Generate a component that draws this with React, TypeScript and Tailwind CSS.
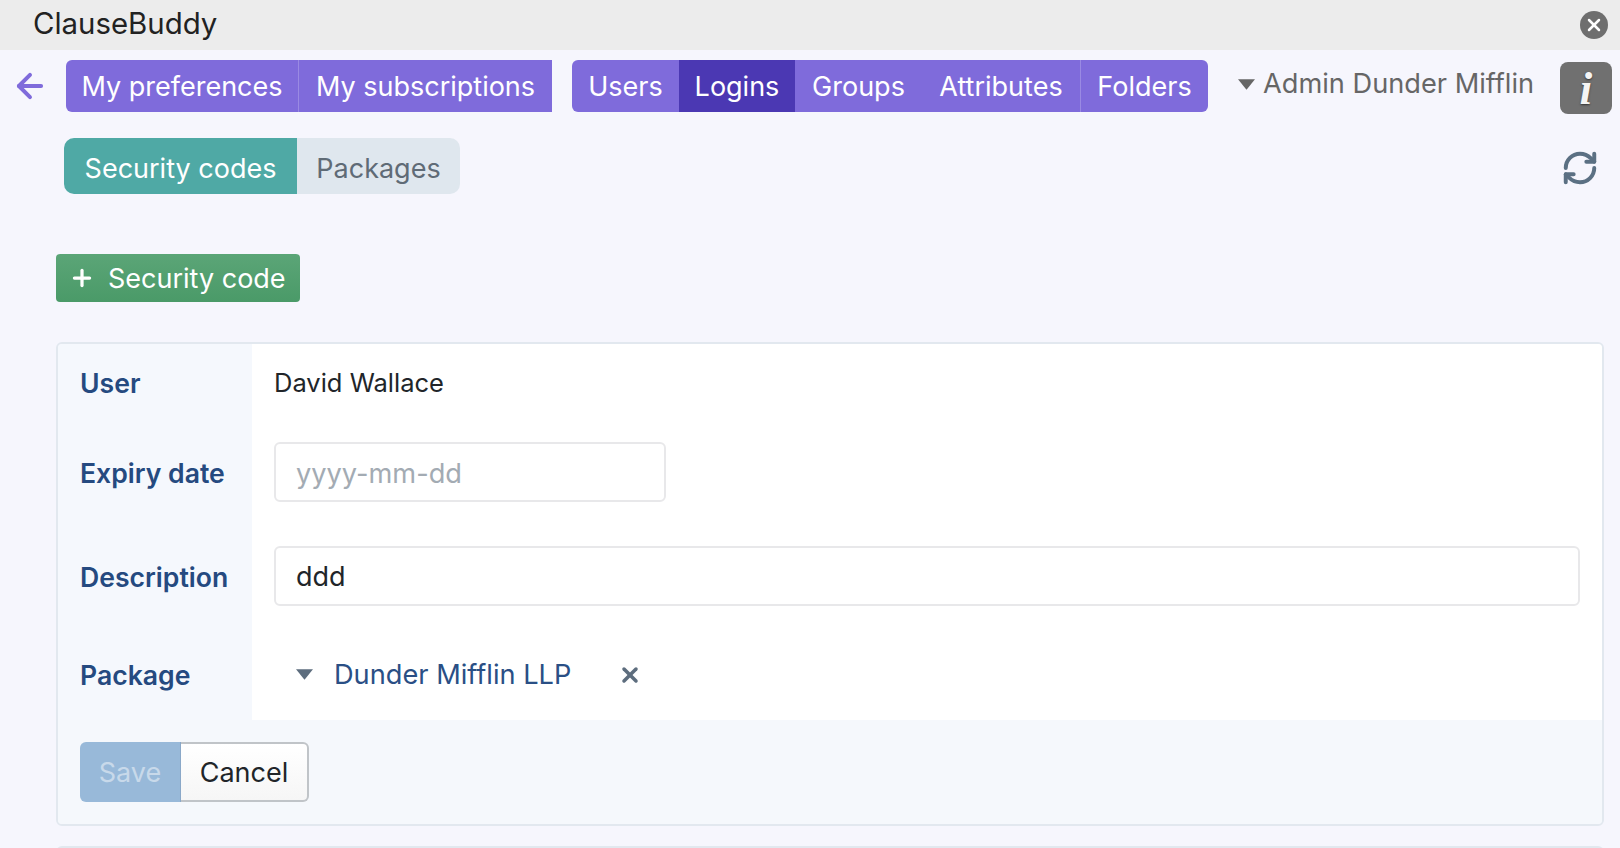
import { ArrowLeft, Plus, RefreshCw, X } from 'lucide-react'

const FONT = "font-['Inter','Noto_Sans',sans-serif]"

function Caret({ className }: { className: string }) {
  return (
    <svg viewBox="0 0 16 10" className={className} fill="currentColor">
      <path d="M0 0h16L8 10z" />
    </svg>
  )
}

function NavButton({ label, active, divider, width }: { label: string; active?: boolean; divider?: boolean; width: string }) {
  return (
    <div
      className={`flex h-full items-center justify-center pt-[2px] text-white ${width} ${active ? 'bg-[#4b38b3]' : 'bg-[#7f6bdb]'} ${divider ? 'border-r border-[#9a8ae3]' : ''}`}
    >
      {label}
    </div>
  )
}

function FormRow({ label, height, children }: { label: string; height: string; children: React.ReactNode }) {
  return (
    <div className={`flex ${height}`}>
      <div className="flex w-[194px] shrink-0 items-center bg-[#f5f8fd] pl-[22px] pt-[3px] text-[26.6px] font-semibold text-[#254a80]">
        {label}
      </div>
      <div className="flex flex-1 items-center bg-white pl-[22px] pr-[22px]">{children}</div>
    </div>
  )
}

export default function App() {
  return (
    <div className={`${FONT} h-[848px] overflow-hidden bg-[#f6f6fd] text-[27px]`}>
      {/* Title bar */}
      <div className="flex h-[50px] items-center justify-between bg-[#ececec] pl-[33px] pr-[12px]">
        <div className="pb-[1px] text-[29.4px] text-[#222222]">ClauseBuddy</div>
        <div className="flex h-[28px] w-[28px] items-center justify-center rounded-full bg-[#6e6e6e]">
          <X size={20} strokeWidth={3} className="text-white" />
        </div>
      </div>

      {/* Main nav */}
      <div className="mt-[10px] flex h-[52px]">
        <div className="flex w-[66px] shrink-0 items-center pl-[11px]">
          <ArrowLeft size={38} strokeWidth={2.5} className="text-[#7f6bdb]" />
        </div>
        <div className="flex h-full overflow-hidden rounded-l-[6px]">
          <NavButton label="My preferences" divider width="w-[233px]" />
          <NavButton label="My subscriptions" width="w-[253px]" />
        </div>
        <div className="ml-[20px] flex h-full overflow-hidden rounded-[6px]">
          <NavButton label="Users" width="w-[107px]" />
          <NavButton label="Logins" active width="w-[116px]" />
          <NavButton label="Groups" width="w-[127px]" />
          <NavButton label="Attributes" divider width="w-[159px]" />
          <NavButton label="Folders" width="w-[127px]" />
        </div>
        <div className="ml-[30px] flex h-[46px] items-center pt-[2px] text-[27.2px] text-[#666666]">
          <Caret className="mr-[8px] h-[11px] w-[17px] text-[#666666]" />
          <span>Admin Dunder Mifflin</span>
        </div>
        <div className="ml-auto mr-[8px] mt-[2px] flex h-[52px] w-[52px] items-center justify-center rounded-[8px] bg-[#707070]">
          <span className="font-['Liberation_Serif',serif] text-[46px] font-bold italic text-[#f4f4f4] [text-shadow:0_1px_2px_#333333]">i</span>
        </div>
      </div>

      {/* Tabs */}
      <div className="ml-[64px] mr-[21px] mt-[26px] flex h-[56px] items-center justify-between">
        <div className="flex h-full overflow-hidden rounded-[10px]">
          <div className="flex w-[233px] items-center justify-center bg-[#4fa9a5] pt-[6px] text-white">Security codes</div>
          <div className="flex w-[163px] items-center justify-center bg-[#dfe7ee] pt-[6px] text-[#5f6b76]">Packages</div>
        </div>
        <RefreshCw size={38} strokeWidth={2.5} className="mt-[3px] text-[#5b7083]" />
      </div>

      {/* Add button */}
      <div className="ml-[56px] mt-[60px] flex h-[48px] w-[244px] items-center rounded-[4px] bg-gradient-to-b from-[#5ba577] to-[#4a9a68] pl-[13px] text-white">
        <Plus size={26} strokeWidth={3} className="mr-[13px]" />
        <span className="pt-[2px]">Security code</span>
      </div>

      {/* Form card */}
      <div className="ml-[56px] mr-[16px] mt-[40px] overflow-hidden rounded-[6px] border-2 border-[#e2e8ef]">
        <FormRow label="User" height="h-[77px]">
          <span className="pt-[2px] text-[25.5px] text-[#212529]">David Wallace</span>
        </FormRow>
        <FormRow label="Expiry date" height="h-[102px]">
          <div className="flex h-[60px] w-[392px] items-center rounded-[6px] border-2 border-[#e8e8ea] bg-white pl-[20px] pt-[4px] text-[27.2px] text-[#a3abb3]">
            yyyy-mm-dd
          </div>
        </FormRow>
        <FormRow label="Description" height="h-[106px]">
          <div className="flex h-[60px] w-full items-center rounded-[6px] border-2 border-[#e8e8ea] bg-white pl-[20px] pt-[2px] text-[#212529]">
            ddd
          </div>
        </FormRow>
        <FormRow label="Package" height="h-[91px]">
          <Caret className="ml-[22px] mr-[21px] h-[11px] w-[17px] text-[#5d6d7e]" />
          <span className="pt-[2px] text-[27.2px] text-[#2a4f85]">Dunder Mifflin LLP</span>
          <X size={24} strokeWidth={3.5} className="ml-[47px] text-[#5d6d7e]" />
        </FormRow>
        <div className="h-[104px] bg-[#f5f8fc] pl-[22px] pt-[22px]">
          <div className="flex h-[60px] w-[229px]">
            <div className="flex w-[101px] items-center justify-center rounded-l-[6px] border-r border-[#8aa8c8] bg-[#98b9d9] pt-[2px] text-[#c8d9ea]">Save</div>
            <div className="flex w-[128px] items-center justify-center rounded-r-[6px] border-2 border-l-0 border-[#c0c4c8] bg-gradient-to-b from-white to-[#f6f6f6] pt-[2px] text-[#212529]">Cancel</div>
          </div>
        </div>
      </div>

      {/* Next card, cut off by the window */}
      <div className="ml-[56px] mr-[16px] mt-[20px] h-[20px] rounded-t-[6px] border-2 border-[#e2e8ef]" />
    </div>
  )
}
